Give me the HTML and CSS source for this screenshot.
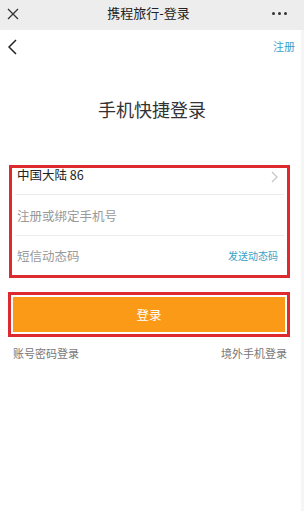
FILE: index.html
```html
<!DOCTYPE html>
<html lang="zh-CN">
<head>
    <meta charset="UTF-8">
    <meta name="viewport" content="width=device-width, initial-scale=1.0">
    <title>携程旅行-登录</title>
    <link rel="stylesheet" href="styles.css">
</head>
<body>

    <div class="topbar">
        <svg class="close" width="12" height="12" viewBox="0 0 12 12">
            <path d="M1 1 L11 11 M11 1 L1 11" stroke="#333" stroke-width="1.3" fill="none"/>
        </svg>
        <span class="topbar-title">携程旅行-登录</span>
        <span class="more"><i></i><i></i><i></i></span>
    </div>

    <div class="nav">
        <svg class="back" width="9" height="16" viewBox="0 0 9 16">
            <path d="M8 1 L1 8 L8 15" stroke="#222" stroke-width="1.5" fill="none"/>
        </svg>
        <a class="register">注册</a>
    </div>

    <h1 class="title">手机快捷登录</h1>

    <div class="form-box">
        <div class="row row-country">
            <span>中国大陆 86</span>
            <svg width="7" height="12" viewBox="0 0 7 12">
                <path d="M1 1 L6 6 L1 11" stroke="#c4c4c4" stroke-width="1.2" fill="none"/>
            </svg>
        </div>
        <div class="row">
            <span class="placeholder">注册或绑定手机号</span>
        </div>
        <div class="row row-last">
            <span class="placeholder">短信动态码</span>
            <a class="send-code">发送动态码</a>
        </div>
    </div>

    <div class="btn-box">
        <button class="login-btn">登录</button>
    </div>

    <div class="links">
        <a>账号密码登录</a>
        <a>境外手机登录</a>
    </div>

</body>
</html>
```

FILE: styles.css
```css
body { margin: 0; min-height: 100vh; background: #fff; box-shadow: inset -3px 0 #f5f5f5; font-family: "Noto Sans CJK SC", "Noto Sans", sans-serif; color: #222; }
a { text-decoration: none; }

.topbar { height: 30px; background: #ededed; display: flex; align-items: center; justify-content: space-between; padding: 0 17px 0 7px; }
.close { display: block; margin-top: -3px; }
.topbar-title { font-size: 13px; line-height: 16px; color: #222; margin-left: 6px; margin-top: -4px; }
.more { display: flex; gap: 3px; margin-top: -3px; }
.more i { width: 3px; height: 3px; border-radius: 50%; background: #333; }

.nav { height: 34px; display: flex; align-items: center; justify-content: space-between; padding: 0 9px 0 8px; }
.back { display: block; margin-top: 0; }
.register { font-size: 11px; line-height: 14px; color: #3a9fc8; margin-top: -2px; }

.title { margin: 0; padding: 32px 0 43px; font-size: 18px; line-height: 26px; font-weight: normal; text-align: center; color: #333; }

.form-box { margin: 0 14px 0 9px; border: 3px solid #dd2a2f; }
.row { height: 40px; margin: 0 3px; padding: 0 6px 0 2px; display: flex; align-items: center; justify-content: space-between; border-bottom: 1px solid #ececec; font-size: 12.5px; }
.row-country { height: 26px; align-items: flex-start; line-height: 14px; color: #222; }
.row-country svg { margin-top: 3px; }
.row-last { height: 39px; border-bottom: none; }
.placeholder { color: #999; }
.send-code { font-size: 10px; color: #3a9fc8; }

.btn-box { margin: 14px 14px 0 8px; border: 3px solid #dd2a2f; padding: 2px; }
.login-btn { display: block; width: 100%; height: 35px; border: none; background: #fb9a17; color: #fff; font-family: inherit; font-size: 12.5px; }

.links { display: flex; justify-content: space-between; padding: 0 17px 0 13px; margin-top: 8px; font-size: 11px; line-height: 16px; }
.links a { color: #777; }
```
